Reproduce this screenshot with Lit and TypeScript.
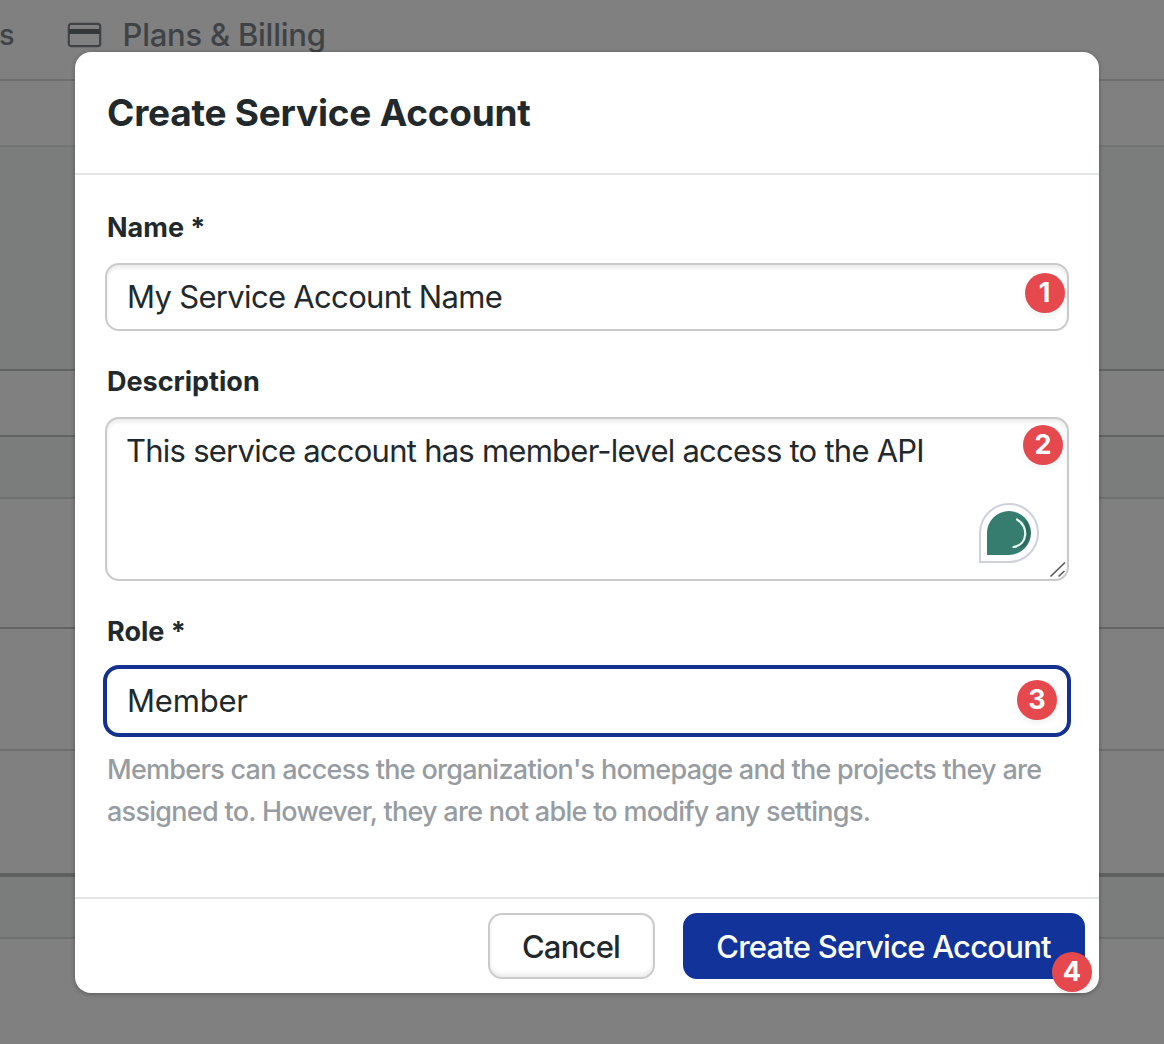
import { LitElement, html, css } from "lit";
import { customElement, property } from "lit/decorators.js";

@customElement("step-badge")
export class StepBadge extends LitElement {
  @property() label = "";

  static styles = css`
    :host {
      display: flex;
      align-items: center;
      justify-content: center;
      width: 40px;
      height: 40px;
      border-radius: 50%;
      background: #e5484d;
      color: #fff;
      font: 700 27px/40px Inter, sans-serif;
      box-shadow: 0 3px 6px rgba(0, 0, 0, 0.06);
    }
  `;

  render() {
    return html`<span>${this.label}</span>`;
  }
}

@customElement("page-backdrop")
export class PageBackdrop extends LitElement {
  static styles = css`
    :host {
      display: flex;
      flex-direction: column;
      height: 100%;
      background: #808080;
    }
    .tabs {
      display: flex;
      align-items: flex-start;
      height: 81px;
      box-sizing: border-box;
      border-bottom: 2px solid #6d6f6e;
      color: #3f4346;
      font: 500 31px/40px Inter, sans-serif;
      padding-top: 15px;
    }
    .prev {
      width: 68px;
      margin-left: -1px;
      font-size: 29px;
    }
    .card {
      display: block;
      width: 35px;
      height: 26px;
      margin: 7px 20px 0 0;
    }
    .tab {
      padding-left: 0.5px;
      letter-spacing: -0.25px;
    }
    .row {
      box-sizing: border-box;
      border-bottom: 2px solid #6d6f6e;
    }
    .tint {
      background: #7a7d7b;
    }
    .dark {
      border-bottom-color: #626463;
    }
    .heavy {
      border-bottom: 4px solid #5f6160;
    }
    .r1 { height: 66px; border-bottom-color: #727473; }
    .r2 { height: 224px; }
    .r3 { height: 66px; }
    .r4 { height: 62px; }
    .r5 { height: 130px; }
    .r6 { height: 122px; }
    .r7 { height: 126px; }
    .r8 { height: 62px; }
  `;

  render() {
    return html`
      <div class="tabs">
        <span class="prev">s</span>
        <svg class="card" viewBox="0 0 35 26" fill="none">
          <rect x="1.8" y="1.8" width="31.4" height="22.4" rx="2.5" stroke="#3f4346" stroke-width="2.2"></rect>
          <rect x="2" y="7" width="31" height="5" fill="#34393c"></rect>
        </svg>
        <span class="tab">Plans &amp; Billing</span>
      </div>
      <div class="row r1"></div>
      <div class="row tint dark r2"></div>
      <div class="row dark r3"></div>
      <div class="row tint r4"></div>
      <div class="row dark r5"></div>
      <div class="row r6"></div>
      <div class="row heavy r7"></div>
      <div class="row tint r8"></div>
    `;
  }
}

@customElement("app-root")
export class AppRoot extends LitElement {
  static styles = css`
    :host {
      display: block;
      position: relative;
      width: 1164px;
      height: 1044px;
      overflow: hidden;
      font-family: Inter, sans-serif;
      color: #21292c;
    }
    .modal {
      position: absolute;
      left: 75px;
      top: 52px;
      display: flex;
      flex-direction: column;
      width: 1024px;
      height: 941px;
      border-radius: 16px;
      background: #fff;
      box-shadow: 0 1px 5px rgba(0, 0, 0, 0.3);
    }
    .header {
      box-sizing: border-box;
      height: 123px;
      padding: 0 32px;
      border-bottom: 2px solid #e3e4e4;
    }
    .title {
      margin: 0;
      font-size: 37px;
      line-height: 121px;
      font-weight: 700;
      letter-spacing: -0.23px;
      white-space: nowrap;
    }
    .body {
      flex: 1;
      padding: 33px 30px 0;
    }
    .label {
      display: block;
      padding-left: 2px;
      height: 40px;
      margin-bottom: 15px;
      font-size: 27px;
      line-height: 40px;
      font-weight: 700;
    }
    .control {
      position: relative;
      box-sizing: border-box;
      border: 2px solid #c9caca;
      border-radius: 14px;
      padding: 0 20px;
      background: #fff;
      box-shadow: inset 0 3px 4px rgba(0, 0, 0, 0.08);
      font-size: 31px;
      font-weight: 400;
      line-height: 64px;
      white-space: nowrap;
    }
    .input { height: 68px; margin-bottom: 31px; }
    .area { height: 164px; margin-bottom: 31px; padding-left: 19px; }
    .select {
      height: 72px;
      margin: -2px -2px 0;
      border: 4px solid #14318f;
      border-radius: 16px;
      box-shadow: none;
    }
    .name { letter-spacing: -0.68px; }
    .desc { letter-spacing: -0.75px; }
    .role { letter-spacing: -0.2px; }
    .hint {
      margin: 12px 0 0;
      padding-left: 2px;
      color: #969ca1;
      font-size: 27px;
      font-weight: 500;
      letter-spacing: -0.72px;
      line-height: 42px;
      white-space: nowrap;
    }
    .footer {
      position: relative;
      display: flex;
      justify-content: flex-end;
      gap: 28px;
      box-sizing: border-box;
      height: 96px;
      padding: 14px 14px 0 0;
      border-top: 2px solid #e3e4e4;
    }
    .btn {
      box-sizing: border-box;
      height: 66px;
      padding: 2px 1px 0 0;
      border-radius: 14px;
      font: 500 31px/60px Inter, sans-serif;
      letter-spacing: -0.78px;
      text-align: center;
      white-space: nowrap;
    }
    .cancel {
      width: 167px;
      border: 2px solid #c9caca;
      background: #fff;
      color: #21292c;
      box-shadow: inset 0 -3px 4px rgba(0, 0, 0, 0.08);
    }
    .create {
      width: 402px;
      border: 2px solid #123399;
      background: #123399;
      color: #fff;
    }
    .badge { position: absolute; }
    .b1 { right: 2.5px; top: 8px; }
    .b2 { right: 4px; top: 6px; }
    .b3 { right: 10px; top: 11px; }
    .b4 { right: 7px; top: 52.5px; }
    .helper {
      position: absolute;
      right: 28px;
      top: 84px;
      width: 60px;
      height: 60px;
    }
    .grip {
      position: absolute;
      right: 0;
      bottom: 0;
      width: 18px;
      height: 18px;
    }
  `;

  render() {
    return html`
      <page-backdrop></page-backdrop>
      <section class="modal">
        <header class="header">
          <h1 class="title">Create Service Account</h1>
        </header>
        <div class="body">
          <label class="label">Name *</label>
          <div class="control input">
            <span class="name">My Service Account Name</span>
            <step-badge class="badge b1" label="1"></step-badge>
          </div>
          <label class="label">Description</label>
          <div class="control area">
            <span class="desc">This service account has member-level access to the API</span>
            <step-badge class="badge b2" label="2"></step-badge>
            <svg class="helper" viewBox="0 0 60 60" fill="none">
              <path d="M1 59V30A29 29 0 1 1 30 59Z" fill="#fff" stroke="#ced0dc" stroke-width="2"></path>
              <path d="M8 52V30A22 22 0 1 1 30 52Z" fill="#367d6f"></path>
              <path d="M45.500 22C48 31 46 40 38 44Q43 46 47 42C54 32 52 23 45.500 16Z" fill="#2d6b60"></path>
              <path d="M38 16.500C50 23 49 42 34.500 44" stroke="#e8fbf4" stroke-width="2.200" stroke-linecap="round"></path>
            </svg>
            <svg class="grip" viewBox="0 0 18 18" stroke="#555" stroke-width="1.600">
              <path d="M1.500 15.500L16 1.500M9.500 15.500L15.500 10"></path>
            </svg>
          </div>
          <label class="label">Role *</label>
          <div class="control select">
            <span class="role">Member</span>
            <step-badge class="badge b3" label="3"></step-badge>
          </div>
          <p class="hint">
            Members can access the organization's homepage and the projects they are<br />
            assigned to. However, they are not able to modify any settings.
          </p>
        </div>
        <footer class="footer">
          <button class="btn cancel">Cancel</button>
          <button class="btn create">Create Service Account</button>
          <step-badge class="badge b4" label="4"></step-badge>
        </footer>
      </section>
    `;
  }
}
